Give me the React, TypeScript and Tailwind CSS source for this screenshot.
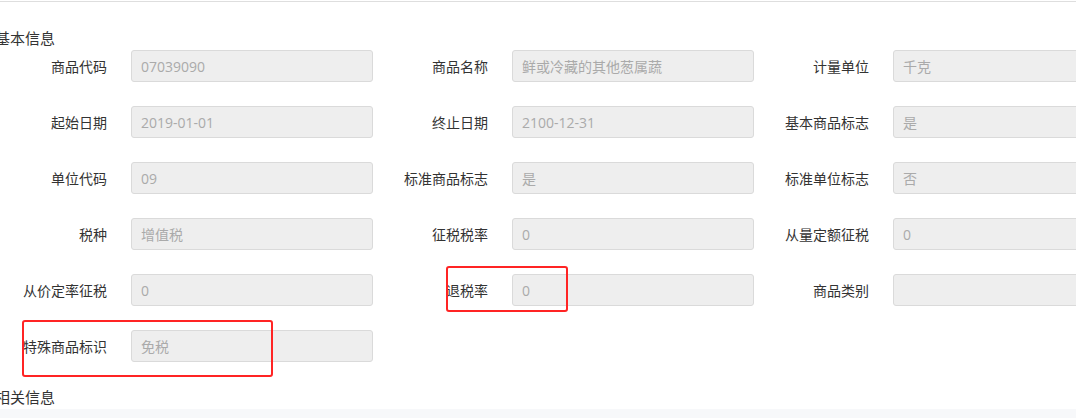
const fields: { label: string; value: string }[] = [
  { label: '商品代码', value: '07039090' },
  { label: '商品名称', value: '鲜或冷藏的其他葱属蔬' },
  { label: '计量单位', value: '千克' },
  { label: '起始日期', value: '2019-01-01' },
  { label: '终止日期', value: '2100-12-31' },
  { label: '基本商品标志', value: '是' },
  { label: '单位代码', value: '09' },
  { label: '标准商品标志', value: '是' },
  { label: '标准单位标志', value: '否' },
  { label: '税种', value: '增值税' },
  { label: '征税税率', value: '0' },
  { label: '从量定额征税', value: '0' },
  { label: '从价定率征税', value: '0' },
  { label: '退税率', value: '0' },
  { label: '商品类别', value: '' },
  { label: '特殊商品标识', value: '免税' },
]

const Field = ({ label, value }: { label: string; value: string }) => (
  <div className="flex items-center h-8">
    <label className="w-[107px] shrink-0 text-right text-[14px] text-[#333]">{label}</label>
    <div className="ml-6 w-[242px] shrink-0 h-8 flex items-center px-[9px] rounded-[3px] border border-[#dadada] bg-[#eeeeee] text-[14px] text-[#aaaaaa]">
      {value}
    </div>
  </div>
)

export default function App() {
  return (
    <div
      className="relative w-[1076px] h-[418px] overflow-hidden bg-white"
      style={{ fontFamily: '"Open Sans", "Noto Sans CJK SC", sans-serif' }}
    >
      <div className="pt-px">
        <div className="border-t border-[#dedede]" />
        <h3 className="mt-[24px] -ml-[5px] h-6 leading-6 text-[15px] text-[#333] font-normal">基本信息</h3>
        <div className="grid grid-cols-[381px_381px_381px] gap-y-6 w-[1143px]">
          {fields.map((f) => (
            <Field key={f.label} label={f.label} value={f.value} />
          ))}
        </div>
        <h3 className="mt-[23px] -ml-[5px] h-6 leading-6 text-[15px] text-[#333] font-normal">相关信息</h3>
        <div className="h-[20px] bg-[#f7f8fa]" />
      </div>

      {/* red annotation boxes */}
      <div className="absolute left-[22px] top-[320px] w-[251px] h-[57px] border-2 border-[#ff2424] rounded-[3px]" />
      <div className="absolute left-[446px] top-[266px] w-[122px] h-[46px] border-2 border-[#ff2424] rounded-[3px]" />
    </div>
  )
}
